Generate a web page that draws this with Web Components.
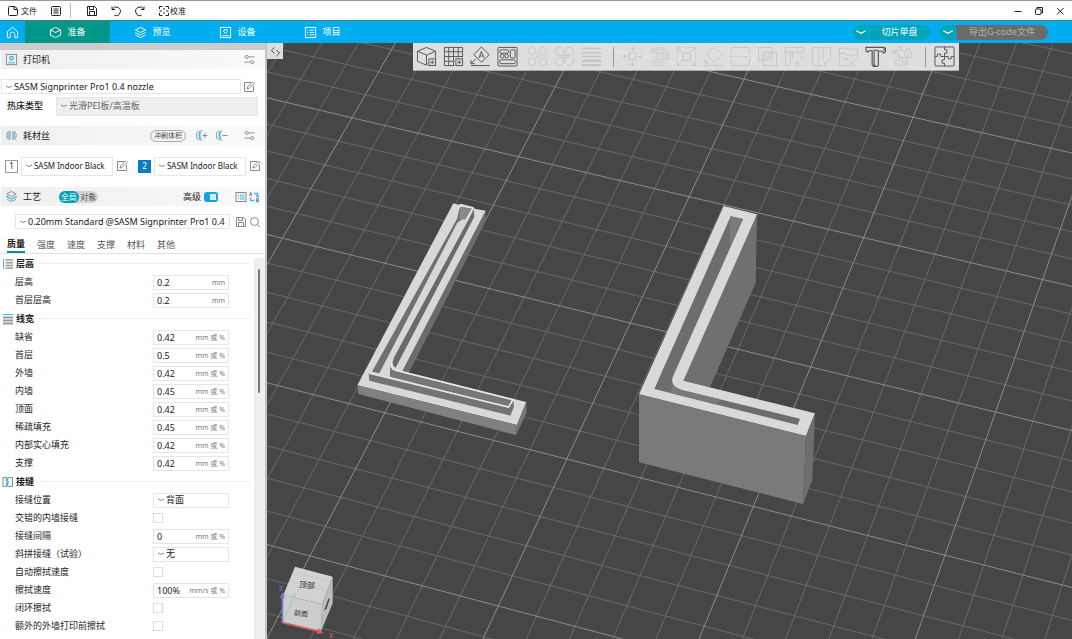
<!DOCTYPE html>
<html lang="zh-CN">
<head>
<meta charset="utf-8">
<title>SASM Signprinter</title>
<style>
html,body{margin:0;height:100%}
body{font:9px/12px "Noto Sans","Noto Sans CJK SC",sans-serif;color:#222;background:#fff;overflow:hidden}
</style>
</head>
<body>
<slicer-app></slicer-app>
<script>
const BASE = `
*{box-sizing:border-box}
button,input,select{font:inherit;color:inherit;background:none;border:0;padding:0;margin:0;outline:0;min-width:0}
button{display:inline-flex;align-items:center;justify-content:center}
select{appearance:none;-webkit-appearance:none}
`;
function define(name, css, html, init) {
  const t = document.createElement('template');
  customElements.define(name, class extends HTMLElement {
    connectedCallback() {
      if (this.shadowRoot) return;
      const r = this.attachShadow({mode: 'open'});
      t.innerHTML = `<style>${BASE}${css}</style>` + (typeof html === 'function' ? html(this) : html);
      r.append(t.content.cloneNode(true));
      if (init) init(this, r);
    }
  });
}

/* Icons: [viewBox, markup]. Strokes use currentColor, --accent tints the second colour. */
const B = 'stroke="var(--accent,#3db8f0)"';
const ICONS = {
  file: ['0 0 12 12', '<path d="M7 1.500H2.500a1 1 0 0 0-1 1v7a1 1 0 0 0 1 1h7a1 1 0 0 0 1-1V4.800Q10 2 7 1.500V4.500H10.500"/>'],
  list: ['0 0 12 12', '<rect x="1.500" y="1.500" width="9" height="9" rx="1"/><path d="M3.500 4h5M3.500 6h5M3.500 8h5"/>'],
  save: ['0 0 12 12', '<path d="M1.500 1.500h7l2 2v7h-9zM3.500 1.500v3h4v-3M3.500 10.500v-4h5v4"/>'],
  undo: ['0 0 12 12', '<path d="M2 1.500v3h3M2.200 4.300A4.300 4.300 0 1 1 4.500 10.300"/>'],
  redo: ['0 0 12 12', '<path d="M10 1.500v3H7M9.800 4.300A4.300 4.300 0 1 0 7.500 10.300"/>'],
  calib: ['0 0 12 12', '<path d="M1.500 4V1.500H4.500M7.500 1.500H10.500V4M10.500 8v2.500H7.500M4.500 10.500H1.500V8M6 3v2M6 7v2M1.500 6H4M8 6h2.500"/>'],
  min: ['0 0 10 10', '<path d="M1.500 5.500h7"/>'],
  restore: ['0 0 10 10', '<rect x="1.500" y="3" width="5.500" height="5.500" rx="1"/><path d="M3 3V1.500h5.500V7H7"/>'],
  close: ['0 0 10 10', '<path d="M2 2l6.500 6.500M8.500 2L2 8.500"/>'],
  home: ['0 0 14 14', '<path d="M1.500 6L7 1.500 12.500 6v6.500H9.500V9a2.500 2.500 0 0 0-5 0v3.500h-3z"/>'],
  cube: ['0 0 14 14', '<path d="M7 1.500l5.500 2.700v5.600L7 12.500 1.500 9.800V4.200zM1.500 4.200L7 7l5.500-2.800"/>'],
  layers: ['0 0 14 14', '<path d="M7 1.500l5.500 2.700L7 7 1.500 4.200zM1.500 7L7 9.700 12.500 7M1.500 9.700L7 12.500l5.500-2.800"/>'],
  layersC: ['0 0 14 14', `<path d="M7 1.500l5 2.700L7 7 2 4.200zM2 9.700L7 12.500l5-2.800M2 6v2M12 6v2"/><path ${B} stroke-width="1.500" d="M2 7L7 9.700 12 7"/>`],
  printer: ['0 0 14 14', '<rect x="1.500" y="1.500" width="11" height="11"/><path d="M3.500 10.500h7M7 8L5 5.800 5.600 4h2.800L9 5.800z"/>'],
  printerC: ['0 0 14 14', `<rect x="1.500" y="1.500" width="11" height="11"/><path ${B} stroke-width="1.300" d="M3.500 10.500h7M7 8L5 5.800 5.600 3.800h2.800L9 5.800z"/>`],
  project: ['0 0 14 14', '<rect x="1.500" y="1.500" width="11" height="11"/><path d="M3.500 4.500h1M6 4.500h5M3.500 7h1M6 7h5M3.500 9.500h1M6 9.500h5"/>'],
  chev: ['0 0 8 6', '<path d="M1 2q3 3 6 0"/>'],
  arrow: ['0 0 14 8', '<path stroke-width="1.500" d="M1.500 2.500L7 5.500l5.500-3"/>'],
  tune: ['0 0 14 14', '<circle cx="4" cy="4.200" r="1.700"/><path d="M6 4.200h6.500M1.500 9.800H8"/><circle cx="10" cy="9.800" r="1.700"/>'],
  edit: ['0 0 12 12', '<path d="M8 1.500H1.500v9h9V5M4 8l.5-2L9.500 1l1.500 1.500-5 5z"/>'],
  spool: ['0 0 14 14', `<path d="M4 2.500Q2 3 2 7t2 4.500M10 2.500q2 .500 2 4.500t-2 4.500M5.500 2.500v9M8.500 2.500v9"/><path ${B} d="M4.500 2.500Q3.500 7 4.500 11.500M9.500 2.500q1 4.500 0 9"/>`],
  spoolAdd: ['0 0 14 14', `<path d="M4 2Q1.500 3 1.500 7T4 12M6 12h2M6 2h2M8 7h5.500M10.700 4.200v5.600"/><path ${B} stroke-width="2" d="M5.500 2.500q-1.500 4.500 0 9"/>`],
  spoolDel: ['0 0 14 14', `<path d="M4 2Q1.500 3 1.500 7T4 12M6 12h2M6 2h2M8 7h5.500"/><path ${B} stroke-width="2" d="M5.500 2.500q-1.500 4.500 0 9"/>`],
  listC: ['0 0 12 12', `<rect x="1" y="1.500" width="10" height="9"/><path ${B} d="M3 4h1M5 4h4.500M3 6h1M5 6h4.500M3 8h1M5 8h4.500"/>`],
  swap: ['0 0 12 12', `<path d="M1.500 5l1.200-4L4 5M2 3.700h1.600M8.500 7.500v3.500h2v-3.500zM8.500 9.200h2"/><path ${B} stroke-width="1.300" d="M6 2.500h3.500V6M8 4.500L9.500 6 11 4.500M6.500 9.500H2.500V6.500"/>`],
  search: ['0 0 12 12', '<circle cx="5.500" cy="5.500" r="4"/><path d="M8.500 8.500l2.500 2.500"/>'],
  collapse: ['0 0 12 12', '<path d="M5 1.500L1.500 5 5 8M7 4.500L10.500 7.500 7 11"/>'],
  hLayer: ['0 0 12 12', `<path stroke="#999" stroke-width="1.500" d="M3.500 2H11M3.500 4.700H11M3.500 7.400H11M3.500 10.100H11"/><path ${B} d="M1.500 1v10"/>`],
  wLine: ['0 0 12 12', `<path stroke="#999" stroke-width="1.800" d="M1 4.500H11M1 7.500H11M1 10.500H11"/><path ${B} d="M1 1.500h10"/>`],
  seam: ['0 0 12 12', `<path d="M4.500 1.500H1v9h3.500M6.500 1.500h4v9h-4"/><path ${B} stroke-width="2" d="M6 1.500L4.500 4 6 6 4.500 8 6 10.500"/>`],
  /* 3D toolbar */
  addCube: ['0 0 22 22', '<path d="M12.500 18.500L10.500 20 1.500 16V5.500L11 1.500l9.500 4v7M1.500 5.500l9.500 4 9.500-4M11 9.500V20"/><rect x="13.500" y="13.500" width="7" height="7"/><path d="M17 15v4M15 17h4"/>'],
  addPlate: ['0 0 22 22', '<path d="M12 20.500H1.500v-19h19V12M6 1.500v19M11 1.500v19M16 1.500V12M1.500 6h19M1.500 11h19M1.500 16H12"/><rect x="13.500" y="13.500" width="7" height="7"/><path d="M17 15v4M15 17h4"/>'],
  orient: ['0 0 22 22', '<path d="M12 1l8 8-8 8-8-8zM9.500 12.500L12 5.500l2.500 7M10.500 10.500h3M1 20.500h20M6 13.500l-5 5M1 14.500v4h4"/>'],
  arrange: ['0 0 22 22', '<rect x="1" y="1.500" width="20" height="19.500" rx="1"/><rect x="3" y="4" width="9" height="3.500" rx="1"/><rect x="14" y="4" width="5" height="8.500" rx="1"/><circle cx="5.500" cy="10.500" r="2"/><circle cx="10" cy="10.500" r="2"/><rect x="3" y="14.500" width="16" height="4" rx="1"/>'],
  four: ['0 0 22 22', '<circle cx="5.500" cy="5.500" r="4"/><circle cx="16.500" cy="5.500" r="4"/><circle cx="5.500" cy="16.500" r="4"/><circle cx="16.500" cy="16.500" r="4"/><path d="M11 8.500v5M8.500 11h5"/>'],
  fourSplit: ['0 0 22 22', '<path d="M10 10H5.500a4.300 4.300 0 1 1 4.500-4.500zM12 10V5.500A4.300 4.300 0 1 1 16.500 10zM10 12v4.500A4.300 4.300 0 1 1 5.500 12zM12 12h4.500a4.300 4.300 0 1 1-4.500 4.500z"/>'],
  bars: ['0 0 22 22', '<path stroke-width="1.500" d="M1 2.500h20M1 7h20M1 11h20"/><path stroke-width="2.500" d="M1 15.500h20M1 20h20"/>'],
  move: ['0 0 22 22', '<rect x="7.500" y="7.500" width="7" height="7"/><path d="M11 5V1.500M8.500 3.500L11 1l2.500 2.500M11 17v3.500M8.500 18.500L11 21l2.500-2.500M5 11H1.500M3.500 8.500L1 11l2.500 2.500M17 11h3.500M18.500 8.500L21 11l-2.500 2.500"/>'],
  rotate: ['0 0 22 22', '<rect x="7.500" y="7.500" width="7" height="7"/><path d="M3 1.500V6h4.500M3 6A9.500 9.500 0 1 1 2 14M5 7A7 7 0 1 1 4.500 13"/>'],
  scale: ['0 0 22 22', '<rect x="7" y="7" width="8" height="8"/><path d="M1.500 5V1.500H5M17 1.500h3.500V5M20.500 17v3.500H17M5 20.500H1.500V17M2 2l4 4M20 2l-4 4M2 20l4-4M20 20l-4-4"/><path stroke-dasharray="2 2" d="M6 1.500h10M6 20.500h10M1.500 6v10M20.500 6v10"/>'],
  flat: ['0 0 22 22', '<path d="M12 1l8 8-8 8-8-8zM1 20.500h20M6 13.500l-4 4.500M2 14v4h4"/>'],
  cut: ['0 0 22 22', '<path d="M1.500 8V1.500h19V8M1.500 14v6.500h19V14"/><path stroke-dasharray="3 2" d="M0 11h22"/>'],
  bool: ['0 0 22 22', '<rect x="1.500" y="1.500" width="14" height="13"/><rect x="6.500" y="6.500" width="14" height="14"/><path d="M7 10l4-4M7 14l8-8M10 14.500l5-5"/>'],
  support: ['0 0 22 22', '<path d="M1.500 20.500v-19h19V6.500H1.500M6.500 6.500v14M1.500 20.500h5M9 6.500v6M12 20l8-8M13 16v4.500h4M18 10l3 3"/>'],
  seamP: ['0 0 22 22', '<path d="M12 20.500H1.500v-19h19V11"/><path stroke-dasharray="2 1" d="M8 1.500v19M13 1.500v13"/><path d="M13 20.500l7-7M14 17v3.500h3"/>'],
  paint: ['0 0 22 22', '<path d="M13 20.500H1.500V3q5-2 10 0t9-1V12M1.500 8q5-2 8 1t11-1M5 12l2 2 4-1M13 19l6-6M14 16v4h3"/>'],
  text: ['0 0 22 22', '<path stroke-width="1.200" d="M1 1.500h19l1.500 1V6l-2 1.500-1.500-2h-4v15L12.500 21.500H9L7.500 19.500V5H4L2.500 6.500 1 5zM14 5.500l-1-1H9.500v15.500l1.500 1M20 1.500V5"/>'],
  measure: ['0 0 22 22', '<path d="M1 5h6V1.500h3V5h6V2.500h3V8h2v4H7V8H1zM8 12v3H3v4h5v2h3V12M16 12v8h-2v-4h-3M4 5v3M13 8v3M16 8v3"/>'],
  puzzle: ['0 0 22 22', '<rect x="1" y="1" width="20" height="20" rx="1"/><path d="M11 1v3h2.500v3.500H11V11M1 11h2.500V8.500H7V11h4M11 11h4v2.500h3V11h3M11 21v-3H8.500v-3.500H11V11"/>']
};
define('ui-icon', `:host{display:block;flex:none;width:12px;height:12px}svg{display:block;width:100%;height:100%}`,
  el => { const [v, m] = ICONS[el.getAttribute('name')];
    return `<svg viewBox="${v}" fill="none" stroke="currentColor" stroke-width="1" aria-hidden="true">${m}</svg>`; });

define('title-bar', `
:host{display:flex;align-items:center;height:21px;flex:none;background:#fff;border-top:1px solid #999;border-bottom:1px solid #577;padding:0 6px;font-size:8px}
button{height:18px;gap:2px}
.sep{width:1px;height:15px;background:#bbb}
.file{width:32px}.list{margin:0 6px 0 10px;width:16px}.tool{width:24px}.first{margin-left:9px}.calib{width:36px;gap:0;margin-left:2px}
.win{margin-left:auto;display:flex;gap:11px;padding-right:1px}
.win ui-icon{width:10px;height:10px}`,
`<button class="file"><ui-icon name="file"></ui-icon>文件</button>
<button class="list" aria-label="菜单"><ui-icon name="list"></ui-icon></button><span class="sep"></span>
<button class="tool first" aria-label="保存"><ui-icon name="save"></ui-icon></button>
<button class="tool" aria-label="撤销"><ui-icon name="undo"></ui-icon></button>
<button class="tool" aria-label="重做"><ui-icon name="redo"></ui-icon></button>
<button class="calib"><ui-icon name="calib"></ui-icon>校准</button>
<div class="win"><button aria-label="最小化"><ui-icon name="min"></ui-icon></button><button aria-label="还原"><ui-icon name="restore"></ui-icon></button><button aria-label="关闭"><ui-icon name="close"></ui-icon></button></div>`);

define('main-tabs', `
:host{display:flex;align-items:stretch;height:22px;flex:none;background:#00aeef;color:#fff}
.tab{width:85px;gap:5px}.tab ui-icon,.home ui-icon{width:13px;height:13px}
.home{width:25px}.on{background:#009688}
.act{margin-left:auto;display:flex;align-items:center;padding-right:24px;gap:1px}
.act button{height:15px;background:#00a5bb}
.act .l{width:15px;border-radius:8px 0 0 8px}.act .l ui-icon{width:12px;height:8px}
.slice{width:61px;border-radius:0 8px 8px 0;margin-right:9px}
.act .exp{width:92px;border-radius:0 8px 8px 0;background:#6b6b6b;color:#b0b0b0}`,
`<button class="home" aria-label="主页"><ui-icon name="home"></ui-icon></button>
<button class="tab on"><ui-icon name="cube"></ui-icon>准备</button>
<button class="tab"><ui-icon name="layers"></ui-icon>预览</button>
<button class="tab"><ui-icon name="printer"></ui-icon>设备</button>
<button class="tab"><ui-icon name="project"></ui-icon>项目</button>
<div class="act"><button class="l" aria-label="切片选项"><ui-icon name="arrow"></ui-icon></button><button class="slice">切片单盘</button>
<button class="l" aria-label="导出选项"><ui-icon name="arrow"></ui-icon></button><button class="exp">导出G-code文件</button></div>`);

define('drop-down', `
:host{display:flex;align-items:center;height:15px;border:1px solid #e6e6e6;background:#fff;min-width:0;padding-left:3px;gap:1px}
ui-icon{width:8px;height:6px;color:#888}select{flex:1;height:100%;width:0;text-overflow:clip}`,
el => `<ui-icon name="chev"></ui-icon><select aria-label="${el.getAttribute('label')}"><option>${el.getAttribute('value')}</option></select>`);

define('panel-header', `
:host{display:flex;align-items:center;height:19px;padding:0 8px 0 4px;gap:5px;background:linear-gradient(90deg,#efefef,#fafafa);margin-left:1px}
ui-icon{width:13px;height:13px;color:#888}h2{font:inherit;color:#222;margin:0;flex:1;display:flex;align-items:center;gap:18px}`,
el => `<ui-icon name="${el.getAttribute('icon')}"></ui-icon><h2>${el.getAttribute('label')}<slot name="after"></slot></h2><slot></slot>`);

define('setting-section', `
:host{display:block}
.head{display:flex;align-items:center;height:19px;gap:2px;padding:0 2px;font-weight:700}
.head::after{content:"";flex:1;height:1px;background:#eee;margin-left:3px}
ui-icon{color:#888}h3{font:inherit;margin:0}`,
el => `<div class="head"><ui-icon name="${el.getAttribute('icon')}"></ui-icon><h3>${el.getAttribute('label')}</h3></div><slot></slot>`);

define('setting-row', `
:host{display:flex;align-items:center;height:18px;padding-left:15px}
label{width:138px;flex:none}
.box{display:flex;align-items:center;width:76px;height:15px;border:1px solid #e6e6e6;padding:0 3px}
.box input{flex:1;width:0;height:100%}.unit{font-size:7px;color:#777;padding-top:2px}
drop-down{width:76px}
input[type=checkbox]{appearance:none;-webkit-appearance:none;width:10px;height:10px;border:1px solid #ddd;background:#fff}`,
el => { const a = n => el.getAttribute(n), k = a('kind');
  if (k === 'select') return `<label>${a('label')}</label><drop-down label="${a('label')}" value="${a('value')}"></drop-down>`;
  if (k === 'check') return `<label for="f">${a('label')}</label><input id="f" type="checkbox">`;
  return `<label for="f">${a('label')}</label><div class="box"><input id="f" value="${a('value')}"><span class="unit">${a('unit')}</span></div>`; });

const MP = 'mm 或 %';
const SECTIONS = [
  ['hLayer', '层高', [['层高', '0.2', 'mm'], ['首层层高', '0.2', 'mm']]],
  ['wLine', '线宽', [['缺省', '0.42', MP], ['首层', '0.5', MP], ['外墙', '0.42', MP], ['内墙', '0.45', MP], ['顶面', '0.42', MP], ['稀疏填充', '0.45', MP], ['内部实心填充', '0.42', MP], ['支撑', '0.42', MP]]],
  ['seam', '接缝', [['接缝位置', '背面', 'select'], ['交错的内墙接缝', '', 'check'], ['接缝间隔', '0', MP], ['斜拼接缝（试验）', '无', 'select'], ['自动擦拭速度', '', 'check'], ['擦拭速度', '100%', 'mm/s 或 %'], ['闭环擦拭', '', 'check'], ['额外的外墙打印前擦拭', '', 'check']]]
];
const sectionHTML = SECTIONS.map(([i, l, rows]) => `<setting-section icon="${i}" label="${l}">` +
  rows.map(([n, v, u]) => `<setting-row label="${n}" value="${v}" ${u === 'select' || u === 'check' ? `kind="${u}"` : `unit="${u}"`}></setting-row>`).join('') + '</setting-section>').join('');

define('side-panel', `
:host{display:flex;flex-direction:column;width:267px;flex:none;background:#fff;border-right:2px solid #c4c4c4;overflow:hidden}
.strip{height:7px;flex:none;background:#ccc}
panel-header{flex:none}
.row{display:flex;align-items:center;flex:none}
.ic{width:12px;height:12px;color:#888}
.printer{padding:10px 10px 0 1px;gap:2px}.printer drop-down{width:240px}
.bed{padding:3px 7px 11px 7px;height:32px}.bed label{width:49px;font-weight:500}.bed drop-down{flex:1;height:19px;background:#efefef;color:#666}
.flush{height:12px;border:1px solid #aaa;border-radius:6px;padding:0 3px;font-size:7px;color:#444;margin-right:3px}
.hi{color:#888;width:15px}.hi ui-icon{width:13px;height:13px}.gap{margin-left:8px}
.fil{padding:12px 4px 12px 5px;gap:3px;height:42px}.fil drop-down{width:93px;height:19px;font-size:8px}
.num{width:13px;height:13px;border:1px solid #999;font-size:8px}.num.b{background:#0a7cc0;border-color:#0a7cc0;color:#fff;margin-left:7px}
.seg{display:flex;width:39px;height:12px;border-radius:6px;background:#d4d4d4;font-size:8px;color:#555}.seg button{flex:1}.seg .on{background:#00a0b4;color:#fff;border-radius:6px}
.adv{display:flex;align-items:center;gap:3px;margin-right:12px}
.adv input{appearance:none;-webkit-appearance:none;width:14px;height:10px;border-radius:3px;background:linear-gradient(90deg,transparent 6px,#d8eefa 6px,#d8eefa 12px,transparent 12px) 0 2px/14px 6px no-repeat,#10a5e8}
.cmp{margin:0 -3px 0 -4px}
.preset{padding:8px 4px 0 15px;gap:2px}.preset drop-down{flex:1}.preset .save{margin-left:3px}
.tabs{height:25px;padding:0 7px;border-bottom:1px solid #e2e2e2;align-items:stretch;gap:12px;color:#555}
.tabs button{padding-top:7px}.tabs .on{font-weight:700;color:#222;border-bottom:2px solid #009688}
.scroll{flex:1;min-height:0;display:flex}
.list{flex:1;min-width:0;overflow:hidden;padding-right:3px}
.track{width:11px;margin-top:4px;background:#eee;padding:11px 4px}.thumb{width:2px;height:124px;border-radius:1px;background:#777}`,
`<div class="strip"></div>
<panel-header icon="printerC" label="打印机"><button class="hi" aria-label="设置"><ui-icon name="tune"></ui-icon></button></panel-header>
<div class="row printer"><drop-down label="打印机" value="SASM Signprinter Pro1 0.4 nozzle"></drop-down><button class="ic" aria-label="编辑"><ui-icon name="edit"></ui-icon></button></div>
<div class="row bed"><label>热床类型</label><drop-down label="热床类型" value="光滑PEI板/高温板"></drop-down></div>
<panel-header icon="spool" label="耗材丝"><button class="flush">冲刷体积</button><button class="hi" aria-label="添加"><ui-icon name="spoolAdd"></ui-icon></button><button class="hi" aria-label="移除"><ui-icon name="spoolDel"></ui-icon></button><button class="hi gap" aria-label="设置"><ui-icon name="tune"></ui-icon></button></panel-header>
<div class="row fil"><button class="num">1</button><drop-down label="耗材丝 1" value="SASM Indoor Black"></drop-down><button class="ic" aria-label="编辑"><ui-icon name="edit"></ui-icon></button>
<button class="num b">2</button><drop-down label="耗材丝 2" value="SASM Indoor Black"></drop-down><button class="ic" aria-label="编辑"><ui-icon name="edit"></ui-icon></button></div>
<panel-header icon="layersC" label="工艺"><div class="seg" slot="after"><button class="on">全局</button><button>对象</button></div>
<label class="adv">高级<input type="checkbox" role="switch" checked></label><button class="ic" aria-label="列表"><ui-icon name="listC"></ui-icon></button><button class="ic cmp" aria-label="比较"><ui-icon name="swap"></ui-icon></button></panel-header>
<div class="row preset"><drop-down label="工艺预设" value="0.20mm Standard @SASM Signprinter Pro1 0.4"></drop-down><button class="ic save" aria-label="保存"><ui-icon name="save"></ui-icon></button><button class="ic" aria-label="搜索"><ui-icon name="search"></ui-icon></button></div>
<div class="row tabs"><button class="on">质量</button><button>强度</button><button>速度</button><button>支撑</button><button>材料</button><button>其他</button></div>
<div class="scroll"><div class="list">${sectionHTML}</div><div class="track"><div class="thumb"></div></div></div>`);

define('view-toolbar', `
:host{display:flex;align-items:center;height:28px;width:546px;padding:0 5px 0 3px;gap:7px;background:rgba(255,255,255,.82);border-bottom:1px solid #aaa;color:#555}
button{width:20px;height:24px;flex:none}button ui-icon{width:21px;height:21px}
button:disabled{color:#c6c6c6}.sep{width:1px;height:20px;background:#999;margin:0 2px 0 5px}.g{margin-left:3px}`,
(() => { const b = (n, l, d, c = '') => `<button ${d ? 'disabled' : ''} class="${c}" aria-label="${l}"><ui-icon name="${n}"></ui-icon></button>`;
  return b('addCube', '添加') + b('addPlate', '添加盘') + b('orient', '自动朝向') + b('arrange', '自动摆放') + b('four', '拆分为对象', 1, 'g') + b('fourSplit', '拆分为零件', 1) + b('bars', '可变层高', 1) +
  '<span class="sep"></span>' + b('move', '移动', 1) + b('rotate', '旋转', 1) + b('scale', '缩放', 1) + b('flat', '选择底面', 1) + b('cut', '切割', 1) + b('bool', '布尔', 1) + b('support', '支撑绘制', 1) + b('seamP', '接缝绘制', 1) + b('paint', '上色', 1) + b('text', '文字') + b('measure', '测量', 1) +
  '<span class="sep"></span>' + b('puzzle', '装配'); })());

/* Perspective of the build plate: one unit is ten cells, bright lines fall on every fifth. */
function plateGrid() {
  const P = (u, v) => { const w = 1 - .02333 * u - .07073 * v;
    return ((324.95 * u - 161 * v + 518.6) / w).toFixed(1) + ' ' + ((75.26 * u + 226.8 * v + 156.8) / w).toFixed(1); };
  let minor = '', major = '';
  for (let i = -30; i <= 40; i++) {
    const t = i / 10, s = `M${P(t, -2.5)}L${P(t, 4)}M${P(-3, t)}L${P(4, t)}`;
    if (i % 5) minor += s; else major += s;
  }
  return `<path d="${minor}" stroke="#686a69"/><path d="${major}" stroke="#8b8c8b"/>`;
}
define('plate-view', `
:host{display:block;position:relative;flex:1;min-width:0;background:#454746;overflow:hidden}
svg{position:absolute;inset:0;width:100%;height:100%}
view-toolbar{position:absolute;left:146px;top:0}
.fold{position:absolute;left:0;top:0;width:16px;height:16px;background:#ddd;color:#444}.fold ui-icon{width:11px;height:11px}`,
`<svg viewBox="267 43 805 596" preserveAspectRatio="xMinYMin slice" role="img" aria-label="打印盘">
<g fill="none" stroke-width="1">${plateGrid()}</g>
<g transform="translate(340 190) scale(.33333)">
 <path fill="#6c6c6c" d="M437 62V94L207 548 185 544z"/>
 <path fill="#d8d8d8" d="M340 40L355 44 362 41 400 51 404 56 437 62 187 543 559 636 531 705 52 586z"/>
 <path fill="#808080" d="M52 586L531 705 528 735 55 612z"/>
 <path fill="#767676" d="M531 705L559 636 560 668 528 735z"/>
 <path fill="#707070" d="M357 60L362 50 395 56 376 88H366L352 98 118 550 96 545 352 85z"/>
 <path fill="#8a8a8a" d="M362 50L395 56 376 88H358z"/>
 <path fill="#6a6a6a" d="M401 58L403 80 167 533Q158 528 158 515L163 500 385 90z"/>
 <path fill="none" stroke="#e4e4e4" stroke-width="3" d="M357 47L399 53 378 90"/>
 <path fill="#777" d="M150 528Q155 540 170 544L515 630 505 650 150 560z"/>
 <path fill="#747474" d="M86 550L506 654 520 632 522 650 511 677 88 572z"/>
 <path fill="none" stroke="#e6e6e6" stroke-width="4" d="M155 512Q150 534 164 540L518 629 506 651 88 550"/>
</g>
<g transform="translate(620 190) scale(.33333)">
 <path fill="#707070" d="M411 73L407 278 270 592 188 572z"/>
 <path fill="#d9d9d9" d="M311 48L411 73 190 572 585 670 558 738 57 613z"/>
 <path fill="#7a7a7a" d="M57 613L558 738 549 942 57 817z"/>
 <path fill="#6e6e6e" d="M558 738L585 670 577 870 549 942z"/>
 <path fill="#6d6d6d" d="M332 79L369 87 158 562Q150 590 185 600L540 686 533 705 103 597z"/>
 <path fill="#7a7a7a" d="M332 79L369 87 332 168 328 155zM155 580Q158 596 185 600L300 628 290 644 155 610z"/>
</g>
<g transform="translate(260 540) scale(.33333)">
 <path fill="#d2d2d2" d="M105 80L218 110 187 192 70 165z"/>
 <path fill="#cdcdcd" d="M70 165L187 192 182 276 67 248z"/>
 <path fill="#bcbcbc" d="M218 110V190L182 276 187 192z"/>
 <path fill="none" stroke="#c2c2c2" stroke-width="2" d="M118 100L210 124M92 125L200 152M140 90L110 165"/>
 <path fill="#444" d="M206 174l3 4-10 30-6 2z"/>
 <path fill="none" stroke="#a8cfa8" stroke-width="4" d="M67 248L103 165"/><path fill="#a8cfa8" d="M95 170l10-14 4 18z"/>
 <path fill="none" stroke="#7373dd" stroke-width="5" d="M67 248V165"/><path fill="#7373dd" d="M60 174l7-18 7 18z"/>
 <path fill="none" stroke="#e05a5a" stroke-width="5" d="M67 248L178 274"/><path fill="#e05a5a" d="M174 264l16 14-20 4z"/>
</g>
<g font-size="8" fill="#333"><text x="299" y="588" transform="rotate(6 307 585)">顶部</text><text x="294" y="616" font-size="7" transform="rotate(6 300 613)">前面</text>
<text x="329" y="638" font-size="7" fill="#d66">X</text><text x="279" y="591" font-size="7" fill="#77d">Z</text></g>
</svg>
<button class="fold" aria-label="折叠侧栏"><ui-icon name="collapse"></ui-icon></button>
<view-toolbar></view-toolbar>`);

define('slicer-app', `
:host{display:flex;flex-direction:column;height:100vh}
main{flex:1;display:flex;min-height:0}`,
`<title-bar></title-bar><main-tabs></main-tabs><main><side-panel></side-panel><plate-view></plate-view></main>`);
</script>
</body>
</html>
